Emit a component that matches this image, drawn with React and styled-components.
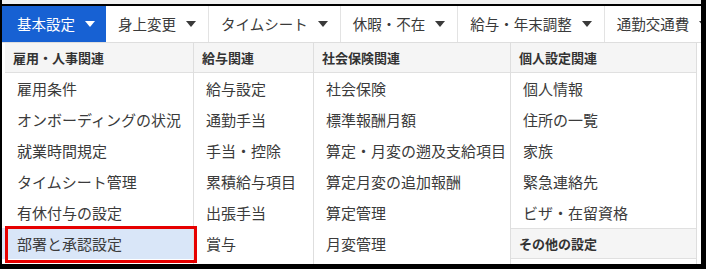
import React from 'react';
import styled, { createGlobalStyle } from 'styled-components';

const Global = createGlobalStyle`
  html, body { margin: 0; padding: 0; background: #fff; }
  body { font-family: "Noto Sans CJK JP", "Noto Sans", sans-serif; }
`;

const Frame = styled.div`
  width: 706px;
  height: 269px;
  box-sizing: border-box;
  border-left: 2px solid #000;
  border-right: 5px solid #000;
  border-bottom: 5px solid #000;
  background: #fff;
  overflow: hidden;
  display: flex;
  flex-direction: column;
`;

const TopStrip = styled.div`
  flex: none;
  height: 4px;
  background: #f1f1f1;
  border-bottom: 2px solid #000;
`;

const Nav = styled.nav`
  flex: none;
  display: flex;
  height: 36px;
  border-bottom: 1px solid #dedede;
`;

const Tab = styled.div`
  flex: none;
  display: flex;
  align-items: center;
  gap: 10px;
  padding: ${(p) => (p.$active ? '0 10px 0 15px' : '0 12px')};
  background: ${(p) => (p.$active ? '#1761d3' : '#fff')};
  color: ${(p) => (p.$active ? '#fff' : '#3a3a3a')};
  border-right: 1px solid ${(p) => (p.$active ? '#1761d3' : '#e3e3e3')};
  font-size: 14.5px;
  line-height: 1;
  white-space: nowrap;
`;

const Caret = styled.span`
  width: 0;
  height: 0;
  border-left: 5px solid transparent;
  border-right: 5px solid transparent;
  border-top: 6px solid currentColor;
`;

const Panel = styled.div`
  flex: 1;
  display: flex;
  min-height: 0;
`;

const Column = styled.div`
  flex: none;
  box-sizing: border-box;
  width: ${(p) => p.$w}px;
  border-right: 1px solid #dedede;
  display: flex;
  flex-direction: column;
  padding-left: ${(p) => p.$inset || 0}px;
`;

const ColHead = styled.div`
  flex: none;
  box-sizing: border-box;
  height: ${(p) => (p.$top ? 30 : 31)}px;
  display: flex;
  align-items: center;
  padding-left: ${(p) => 8 + (p.$pull || 0)}px;
  margin-left: ${(p) => -(p.$pull || 0)}px;
  background: #f5f5f5;
  border-bottom: 1px solid #e0e0e0;
  border-top: ${(p) => (p.$top ? 'none' : '1px solid #e0e0e0')};
  font-size: 13px;
  font-weight: 700;
  color: #333;
  line-height: 1;
  white-space: nowrap;
`;

const Item = styled.div`
  flex: none;
  position: relative;
  box-sizing: border-box;
  height: 31px;
  display: flex;
  align-items: center;
  margin-left: ${(p) => -(p.$pull || 0)}px;
  padding-left: ${(p) => 12 + (p.$pull || 0)}px;
  font-size: 15px;
  color: #3b3b3b;
  line-height: 1;
  white-space: nowrap;
  background: ${(p) => (p.$selected ? '#d9e6f8' : 'transparent')};

  ${(p) =>
    p.$selected &&
    `
    &::after {
      content: '';
      position: absolute;
      left: 3px;
      top: -2px;
      width: 192px;
      height: 37px;
      box-sizing: border-box;
      border: 3px solid #e60000;
      pointer-events: none;
    }
  `}
`;

const tabs = ['基本設定', '身上変更', 'タイムシート', '休暇・不在', '給与・年末調整', '通勤交通費'];

const columns = [
  {
    w: 192,
    inset: 3,
    head: '雇用・人事関連',
    items: ['雇用条件', 'オンボーディングの状況', '就業時間規定', 'タイムシート管理', '有休付与の設定', '部署と承認設定'],
    selected: 5,
  },
  {
    w: 120,
    head: '給与関連',
    items: ['給与設定', '通勤手当', '手当・控除', '累積給与項目', '出張手当', '賞与'],
  },
  {
    w: 197,
    head: '社会保険関連',
    items: ['社会保険', '標準報酬月額', '算定・月変の遡及支給項目', '算定月変の追加報酬', '算定管理', '月変管理'],
  },
  {
    w: 186,
    head: '個人設定関連',
    items: ['個人情報', '住所の一覧', '家族', '緊急連絡先', 'ビザ・在留資格'],
    extra: 'その他の設定',
  },
];

export default function App() {
  return (
    <>
      <Global />
      <Frame>
        <TopStrip />
        <Nav>
          {tabs.map((t, i) => (
            <Tab key={t} $active={i === 0}>
              {t}
              <Caret />
            </Tab>
          ))}
        </Nav>
        <Panel>
          {columns.map((c) => (
            <Column key={c.head} $w={c.w} $inset={c.inset}>
              <ColHead $top $pull={c.inset ? c.inset - 3 : 0}>
                {c.head}
              </ColHead>
              {c.items.map((it, i) => (
                <Item key={it} $selected={c.selected === i} $pull={c.inset}>
                  {it}
                </Item>
              ))}
              {c.extra && <ColHead>{c.extra}</ColHead>}
            </Column>
          ))}
        </Panel>
      </Frame>
    </>
  );
}
